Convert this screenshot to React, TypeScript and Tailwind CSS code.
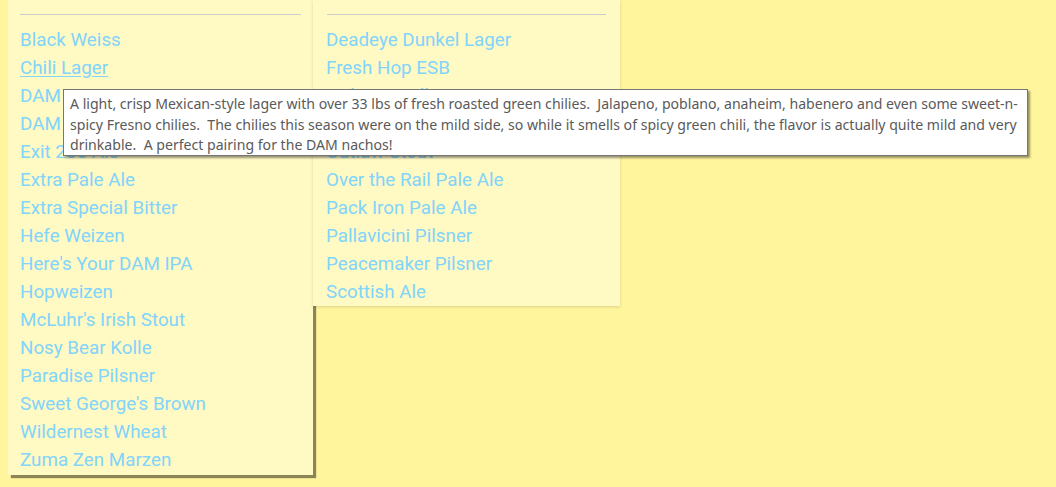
import React from "react";

const left = [
  "Black Weiss",
  "Chili Lager",
  "DAM Lager",
  "DAM Pilsner",
  "Exit 206 Ale",
  "Extra Pale Ale",
  "Extra Special Bitter",
  "Hefe Weizen",
  "Here's Your DAM IPA",
  "Hopweizen",
  "McLuhr's Irish Stout",
  "Nosy Bear Kolle",
  "Paradise Pilsner",
  "Sweet George's Brown",
  "Wildernest Wheat",
  "Zuma Zen Marzen",
];

const right = [
  "Deadeye Dunkel Lager",
  "Fresh Hop ESB",
  "Hideout Helles",
  "Jalapeno Ale",
  "Outlaw Stout",
  "Over the Rail Pale Ale",
  "Pack Iron Pale Ale",
  "Pallavicini Pilsner",
  "Peacemaker Pilsner",
  "Scottish Ale",
];

export default function App() {
  return (
    <div
      className="relative w-[1056px] h-[487px] overflow-hidden bg-[#fff59d]"
      style={{ fontFamily: "Roboto, 'Liberation Sans', sans-serif" }}
    >
      <div className="flex items-start pl-2">
        <div className="w-[305px] bg-[#fff9c4] px-3 pt-[14px] pb-px shadow-[3px_3px_1px_rgba(0,0,0,0.45)]">
          <div className="h-px bg-[#cccccc]" />
          <ul className="mt-[11px]">
            {left.map((b) => (
              <li key={b} className="h-[28px] leading-[28px] text-[18.8px] text-[#81d4fa]">
                <a className={b === "Chili Lager" ? "underline underline-offset-2" : ""}>{b}</a>
              </li>
            ))}
          </ul>
        </div>
        <div className="relative z-10 w-[307px] bg-[#fff9c4] pl-[14px] pr-[14px] pt-[14px] shadow-[0_1px_3px_rgba(0,0,0,0.15)]">
          <div className="h-px bg-[#cccccc]" />
          <ul className="mt-[11px] -ml-px">
            {right.map((b) => (
              <li key={b} className="h-[28px] leading-[28px] text-[18.8px] text-[#81d4fa]">
                {b}
              </li>
            ))}
          </ul>
        </div>
      </div>
      <div
        className="absolute left-[63px] top-[89px] w-[965px] h-[67px] bg-white border border-[#767676] shadow-[2px_2px_2px_rgba(0,0,0,0.4)] z-20 pl-[6px] pt-[4px] text-[14.1px] leading-[20.5px] text-[#5a5a5a] whitespace-pre"
        style={{ fontFamily: "'Noto Sans', 'Open Sans', sans-serif" }}
      >
        <div>A light, crisp Mexican-style lager with over 33 lbs of fresh roasted green chilies.  Jalapeno, poblano, anaheim, habenero and even some sweet-n-</div>
        <div>spicy Fresno chilies.  The chilies this season were on the mild side, so while it smells of spicy green chili, the flavor is actually quite mild and very</div>
        <div>drinkable.  A perfect pairing for the DAM nachos!</div>
      </div>
    </div>
  );
}
